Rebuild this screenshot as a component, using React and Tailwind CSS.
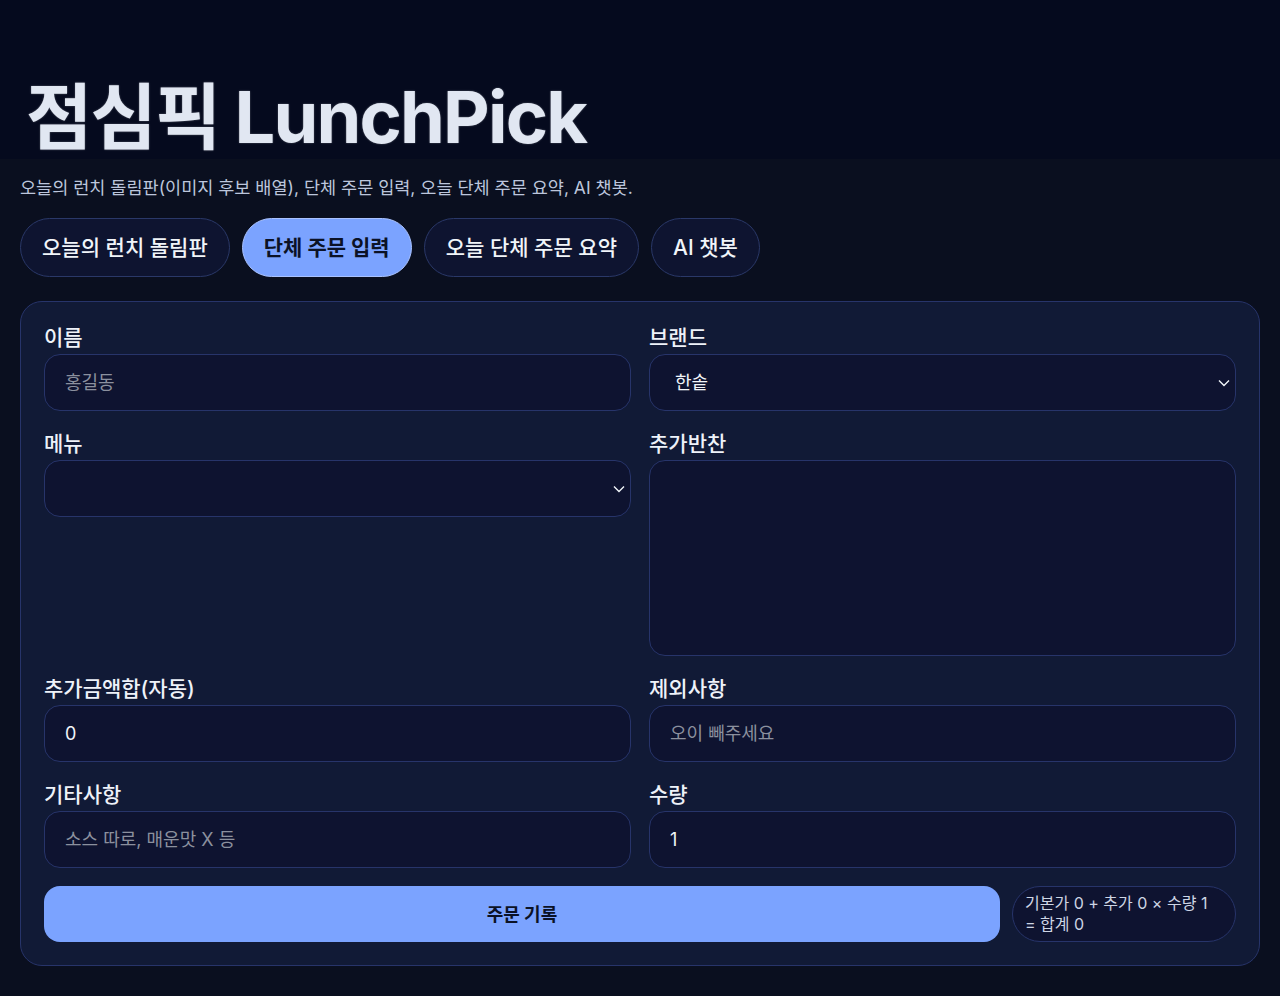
import React, { useState } from 'react';

const font = { fontFamily: 'Inter, "Noto Sans CJK KR", "Noto Sans", sans-serif' };

const tabs = ['오늘의 런치 돌림판', '단체 주문 입력', '오늘 단체 주문 요약', 'AI 챗봇'];

const Chevron = () => (
  <svg
    className="pointer-events-none absolute right-[6px] top-1/2 -translate-y-1/2"
    width="12"
    height="8"
    viewBox="0 0 12 8"
    fill="none"
  >
    <path d="M1 1.5l5 5 5-5" stroke="#f1f5f9" strokeWidth="1.4" />
  </svg>
);

const fieldCls =
  'block w-full rounded-2xl border border-[#27346a] bg-[#0e1330] px-5 text-[18px] text-[#f1f5f9] placeholder:text-[#8b909e] outline-none';

const Label = ({ children }) => (
  <label className="block text-[21px] leading-[30px] font-medium text-[#eef2f9] mb-px">{children}</label>
);

const App = () => {
  const [active, setActive] = useState(1);

  return (
    <div className="min-h-[996px] bg-[#0a0f1f]" style={font}>
      {/* Header */}
      <div className="h-[159px] bg-[#050a1e] px-5 flex items-end">
        <h1 className="ml-[6px] mb-[6px] text-[72px] leading-none font-bold tracking-[-0.025em] text-[#e1e7f2] [text-shadow:0_0_2px_rgba(255,255,255,0.35)]">
          점심픽 LunchPick
        </h1>
      </div>

      <div className="px-5">
        <p className="mt-[17px] text-[17.5px] leading-[24px] text-[#bcc6dc]">
          오늘의 런치 돌림판(이미지 후보 배열), 단체 주문 입력, 오늘 단체 주문 요약, AI 챗봇.
        </p>

        {/* Tabs */}
        <div className="mt-[18px] flex gap-3">
          {tabs.map((t, i) => (
            <button
              key={t}
              onClick={() => setActive(i)}
              className={`h-[59px] px-[21px] rounded-full border text-[21px] ${
                i === active
                  ? 'bg-[#7ba3ff] border-[#a9c2ff] text-[#0b1226] font-bold'
                  : 'bg-[#0e1430] border-[#2a3868] text-[#f1f5f9] font-medium'
              }`}
            >
              {t}
            </button>
          ))}
        </div>

        {/* Order form */}
        <div className="mt-[24px] rounded-[22px] border border-[#27346a] bg-[#111a36] px-[23px] pt-[21px] pb-[23px]">
          <div className="grid grid-cols-2 gap-x-[18px] gap-y-[18px] items-start">
            <div>
              <Label>이름</Label>
              <input className={`${fieldCls} h-[57px]`} placeholder="홍길동" />
            </div>
            <div>
              <Label>브랜드</Label>
              <div className="relative">
                <select className={`${fieldCls} h-[57px] appearance-none pl-[25px]`} defaultValue="한솥">
                  <option>한솥</option>
                </select>
                <Chevron />
              </div>
            </div>

            <div>
              <Label>메뉴</Label>
              <div className="relative">
                <select className={`${fieldCls} h-[57px] appearance-none`} defaultValue="">
                  <option value=""></option>
                </select>
                <Chevron />
              </div>
            </div>
            <div>
              <Label>추가반찬</Label>
              <textarea className={`${fieldCls} h-[196px] resize-none py-3`} />
            </div>

            <div>
              <Label>추가금액합(자동)</Label>
              <input className={`${fieldCls} h-[57px]`} value="0" readOnly />
            </div>
            <div>
              <Label>제외사항</Label>
              <input className={`${fieldCls} h-[57px]`} placeholder="오이 빼주세요" />
            </div>

            <div>
              <Label>기타사항</Label>
              <input className={`${fieldCls} h-[57px]`} placeholder="소스 따로, 매운맛 X 등" />
            </div>
            <div>
              <Label>수량</Label>
              <input className={`${fieldCls} h-[57px]`} type="number" defaultValue={1} />
            </div>
          </div>

          <div className="mt-[18px] flex gap-3">
            <button className="flex-1 h-[56px] rounded-2xl bg-[#7ba3ff] text-[18px] font-bold text-[#0b1226]">
              주문 기록
            </button>
            <div className="w-[224px] h-[56px] rounded-full border border-[#27346a] bg-[#0e1330] px-3 flex flex-col justify-center text-[16px] leading-[21px] text-[#cdd5e4]">
              <span>기본가 0 + 추가 0 × 수량 1</span>
              <span>= 합계 0</span>
            </div>
          </div>
        </div>
      </div>
    </div>
  );
};

export default App;
